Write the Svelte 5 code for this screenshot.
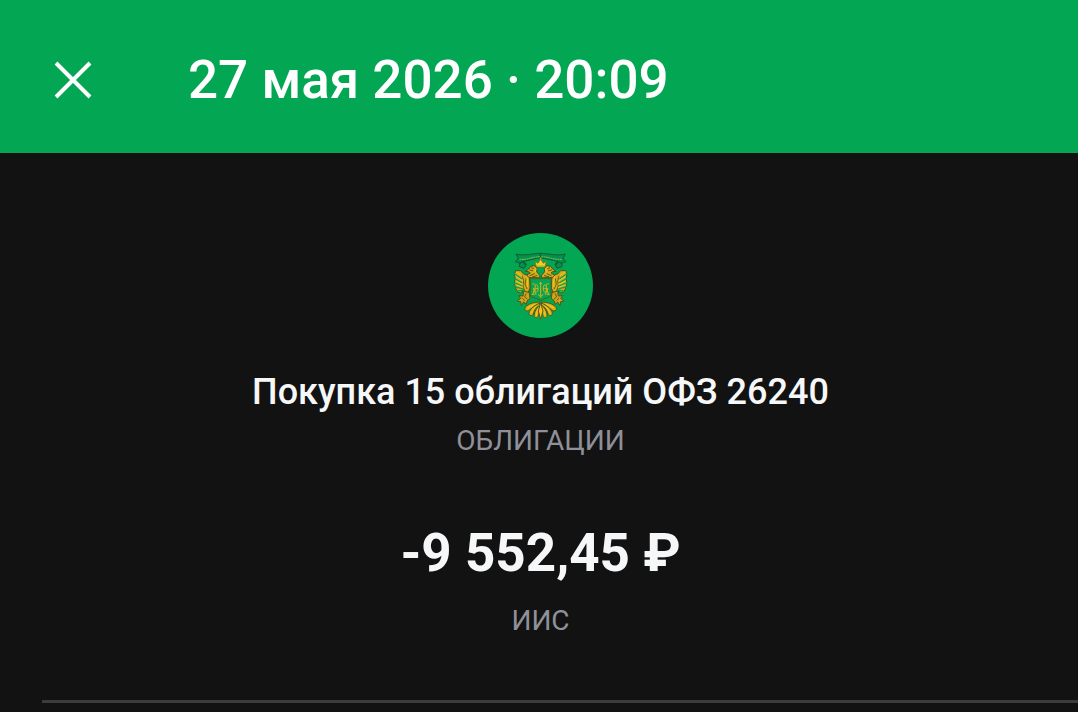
<script lang="ts">
  interface Operation {
    date: string;
    title: string;
    category: string;
    amount: string;
    account: string;
  }

  const operation: Operation = {
    date: '27 мая 2026 · 20:09',
    title: 'Покупка 15 облигаций ОФЗ 26240',
    category: 'ОБЛИГАЦИИ',
    amount: '-9 552,45 ₽',
    account: 'ИИС',
  };

  // The eagle is symmetric: the left half is drawn twice, once mirrored
  const halves = ['', 'translate(364 0) scale(-1 1)'];
</script>

<div class="screen">
  <header class="topbar">
    <button class="close" type="button" aria-label="Закрыть">
      <svg viewBox="0 0 38 38" fill="none" stroke="#fff" stroke-width="4">
        <path d="M2 2L36 36M36 2L2 36" />
      </svg>
    </button>
    <h1>{operation.date}</h1>
  </header>

  <main class="summary">
    <svg class="emblem" viewBox="24 23 315 315" aria-hidden="true">
      <circle cx="181.5" cy="180.5" r="157.5" fill="#03a653" />
      {#each halves as half}
        <g transform={half} stroke-linejoin="round" stroke-linecap="round">
          <!-- ribbon -->
          <path d="M182 84C158 84 132 93 108 86L115 99L106 109L119 113L118 124L133 129L139 117L131 108C148 106 164 98 182 98Z" fill="#05914b" stroke="#0d5c31" stroke-width="3" />
          <path d="M120 102C142 104 160 94 181 94" fill="none" stroke="#8ec253" stroke-width="3" stroke-dasharray="3 4" />
          <path d="M121 113L130 109L136 117" fill="none" stroke="#0d5c31" stroke-width="4" />

          <!-- wing: long separate feathers hanging from the shoulder -->
          <path d="M146 150L131 146L122 136L107 136L103 148L106 160L103 174L107 188L113 200L121 203L128 197L131 206L145 200L150 188L149 165Z" fill="#d6ab1a" stroke="#4d571a" stroke-width="3" />
          <path d="M104 146L124 160M103 159L125 172M103 172L126 182M107 185L127 190M115 197L131 194" fill="none" stroke="#03a653" stroke-width="4" />
          <path d="M126 150L131 166L129 182L134 196M138 160L135 176L141 190" fill="none" stroke="#6b5f18" stroke-width="3" />
          <path d="M109 140L126 152M108 153L127 166M108 167L128 177M111 180L128 186M140 154L143 170L142 184" fill="none" stroke="#f0c820" stroke-width="3" />

          <!-- leg and claws -->
          <path d="M132 197L148 202L150 220L141 227L139 237L131 230L124 241L122 229L112 227L122 219L116 211L128 212Z" fill="#d0a31a" stroke="#4d571a" stroke-width="3" />
          <path d="M138 205L134 215L142 221M128 219L133 225" fill="none" stroke="#6b5f18" stroke-width="3" />

          <!-- head and neck -->
          <path d="M171 157H147L140 149L151 143L146 139L136 138L146 131L152 123L163 121L171 129L170 139L179 150V157Z" fill="#d8ac18" stroke="#4e4f19" stroke-width="3" />
          <path d="M149 134L158 136M155 128L163 129M150 151L163 145M158 154L171 151" fill="none" stroke="#5b5718" stroke-width="3" />
          <path d="M161 126L168 132L165 140" fill="none" stroke="#f5cb22" stroke-width="3" />

          <!-- tail plumes -->
          <g fill="#dbae17" stroke="#495d1b" stroke-width="3">
            <path d="M178 230C162 231 150 234 141 241C132 247 133 256 142 257C151 255 158 242 178 236Z" />
            <path d="M178 234C163 240 149 252 147 263C146 272 157 273 160 266C162 255 168 246 179 240Z" />
            <path d="M180 238C170 246 162 261 163 271C164 279 173 279 175 271L180 252Z" />
          </g>
          <path d="M164 237L143 248M167 244L153 263M173 252L169 270" fill="none" stroke="#f3ca22" stroke-width="3" />

          <!-- left side of the shield and of the monogram -->
          <path d="M184 160H151V205C151 214 160 217 169 219L184 226" fill="#03a653" stroke="#4b651b" stroke-width="3" />
          <path d="M158 176C164 172 167 179 165 188L159 205M166 181C170 173 175 181 174 193C173 202 165 203 165 194C165 188 169 188 174 191M160 189L168 207M156 207H163" fill="none" stroke="#dfae19" stroke-width="3" />
        </g>
      {/each}
      <!-- crown -->
      <path d="M169 125L165 108L174 114L182 101L190 114L199 108L195 125Z" fill="#f3cc25" stroke="#796a18" stroke-width="2" />
      <path d="M182 102V96M179 99H185M171 121H193" fill="none" stroke="#d4ae1c" stroke-width="2" />
      <path d="M172 130H192L187 148H177Z" fill="#03a653" />
      <path d="M182 172V217M174 207L182 214L190 207M178 176L182 171L186 176" fill="none" stroke="#dfae19" stroke-width="3" />
      <path d="M182 232L175 257L182 282L189 257Z" fill="#f0c41f" stroke="#5a5c19" stroke-width="3" />
    </svg>

    <h2>{operation.title}</h2>
    <p class="note category">{operation.category}</p>
    <p class="amount">{operation.amount}</p>
    <p class="note account">{operation.account}</p>
  </main>

  <hr />
</div>

<style>
  :global(body) {
    margin: 0;
    background: #121212;
  }

  .screen {
    font-family: Roboto, 'Liberation Sans', sans-serif;
    color: #f6f7f8;
  }

  .topbar {
    display: flex;
    align-items: center;
    gap: 80px;
    padding: 45px 38px 38px;
    background: #03a653;
    color: #fff;
  }

  .close {
    display: flex;
    padding: 16px;
    border: 0;
    background: none;
    cursor: pointer;
  }

  .close svg {
    width: 38px;
    height: 38px;
  }

  h1,
  h2,
  p {
    margin: 0;
  }

  h1 {
    font-size: 53px;
    font-weight: 500;
    line-height: 70px;
  }

  .summary {
    display: flex;
    flex-direction: column;
    align-items: center;
    padding: 80px 39px 59px 42px;
    text-align: center;
  }

  .emblem {
    width: 105px;
    height: 105px;
    margin-bottom: 29px;
  }

  h2 {
    font-size: 36px;
    font-weight: 500;
    line-height: 50px;
  }

  .note {
    color: #8f9099;
    font-size: 28px;
    line-height: 40px;
  }

  .category {
    margin: 4px 0 60px;
  }

  .amount {
    font-size: 53px;
    font-weight: 700;
    line-height: 64px;
  }

  .account {
    margin-top: 16px;
  }

  hr {
    height: 3px;
    margin: 0 0 0 42px;
    border: 0;
    background: #3c3c3c;
  }
</style>
